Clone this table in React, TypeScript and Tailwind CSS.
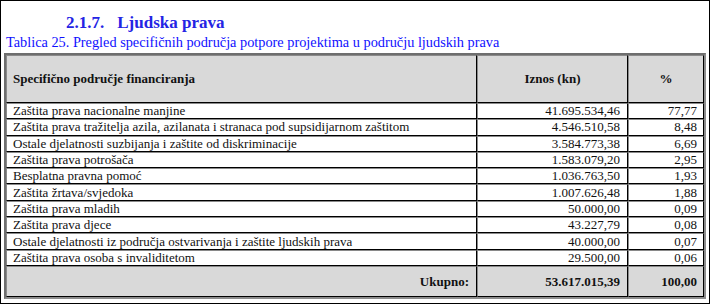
import React from "react";

const rows: [string, string, string][] = [
  ["Zaštita prava nacionalne manjine", "41.695.534,46", "77,77"],
  ["Zaštita prava tražitelja azila, azilanata i stranaca pod supsidijarnom zaštitom", "4.546.510,58", "8,48"],
  ["Ostale djelatnosti suzbijanja i zaštite od diskriminacije", "3.584.773,38", "6,69"],
  ["Zaštita prava potrošača", "1.583.079,20", "2,95"],
  ["Besplatna pravna pomoć", "1.036.763,50", "1,93"],
  ["Zaštita žrtava/svjedoka", "1.007.626,48", "1,88"],
  ["Zaštita prava mladih", "50.000,00", "0,09"],
  ["Zaštita prava djece", "43.227,79", "0,08"],
  ["Ostale djelatnosti iz područja ostvarivanja i zaštite ljudskih prava", "40.000,00", "0,07"],
  ["Zaštita prava osoba s invaliditetom", "29.500,00", "0,06"],
];

const serif = "[font-family:'Liberation_Serif','Times_New_Roman',serif]";

// cell borders: gray top/left, black bottom/right (inset look of old html tables)
const cell = "border-t border-l border-t-[#8a8a8a] border-l-[#8a8a8a] border-b border-r border-b-black border-r-black";

export default function App() {
  return (
    <div className={`w-[710px] h-[304px] border border-black bg-white overflow-hidden ${serif} text-[#111]`}>
      {/* naslov */}
      <div className="pl-[65px] pt-[11px] h-[33px] text-[17px] leading-[21px] font-bold text-[#2424e4]">
        2.1.7.<span className="ml-[13px]">Ljudska prava</span>
      </div>
      <div className="pl-[5px] h-[19px] text-[14.3px] leading-[17px] text-[#1010ff]">
        Tablica 25. Pregled specifičnih područja potpore projektima u području ljudskih prava
      </div>

      <table className={`${serif} ml-[3px] w-[702px] table-fixed border-separate border-spacing-0 border-2 border-l-[#6e6e6e] border-t-[#6e6e6e] border-r-[#8c8c8c] border-b-[#8c8c8c] text-[13px]`}>
        <colgroup>
          <col className="w-[471px]" />
          <col className="w-[151px]" />
          <col />
        </colgroup>
        <thead>
          <tr className="bg-[#d9d9d9] font-bold h-[48px]">
            <th className={`${cell} text-left pl-[6px]`}>Specifično područje financiranja</th>
            <th className={`${cell} text-center`}>Iznos (kn)</th>
            <th className={`${cell} text-center`}>%</th>
          </tr>
        </thead>
        <tbody>
          {rows.map(([name, amount, pct]) => (
            <tr key={name} className="h-[16.3px] leading-[14px]">
              <td className={`${cell} pl-[6px] whitespace-nowrap`}>{name}</td>
              <td className={`${cell} text-right pr-[7px]`}>{amount}</td>
              <td className={`${cell} text-right pr-[6px]`}>{pct}</td>
            </tr>
          ))}
          <tr className="bg-[#d9d9d9] font-bold h-[31px]">
            <td className={`${cell} text-right pr-[7px]`}>Ukupno:</td>
            <td className={`${cell} text-right pr-[7px]`}>53.617.015,39</td>
            <td className={`${cell} text-right pr-[6px]`}>100,00</td>
          </tr>
        </tbody>
      </table>
    </div>
  );
}
